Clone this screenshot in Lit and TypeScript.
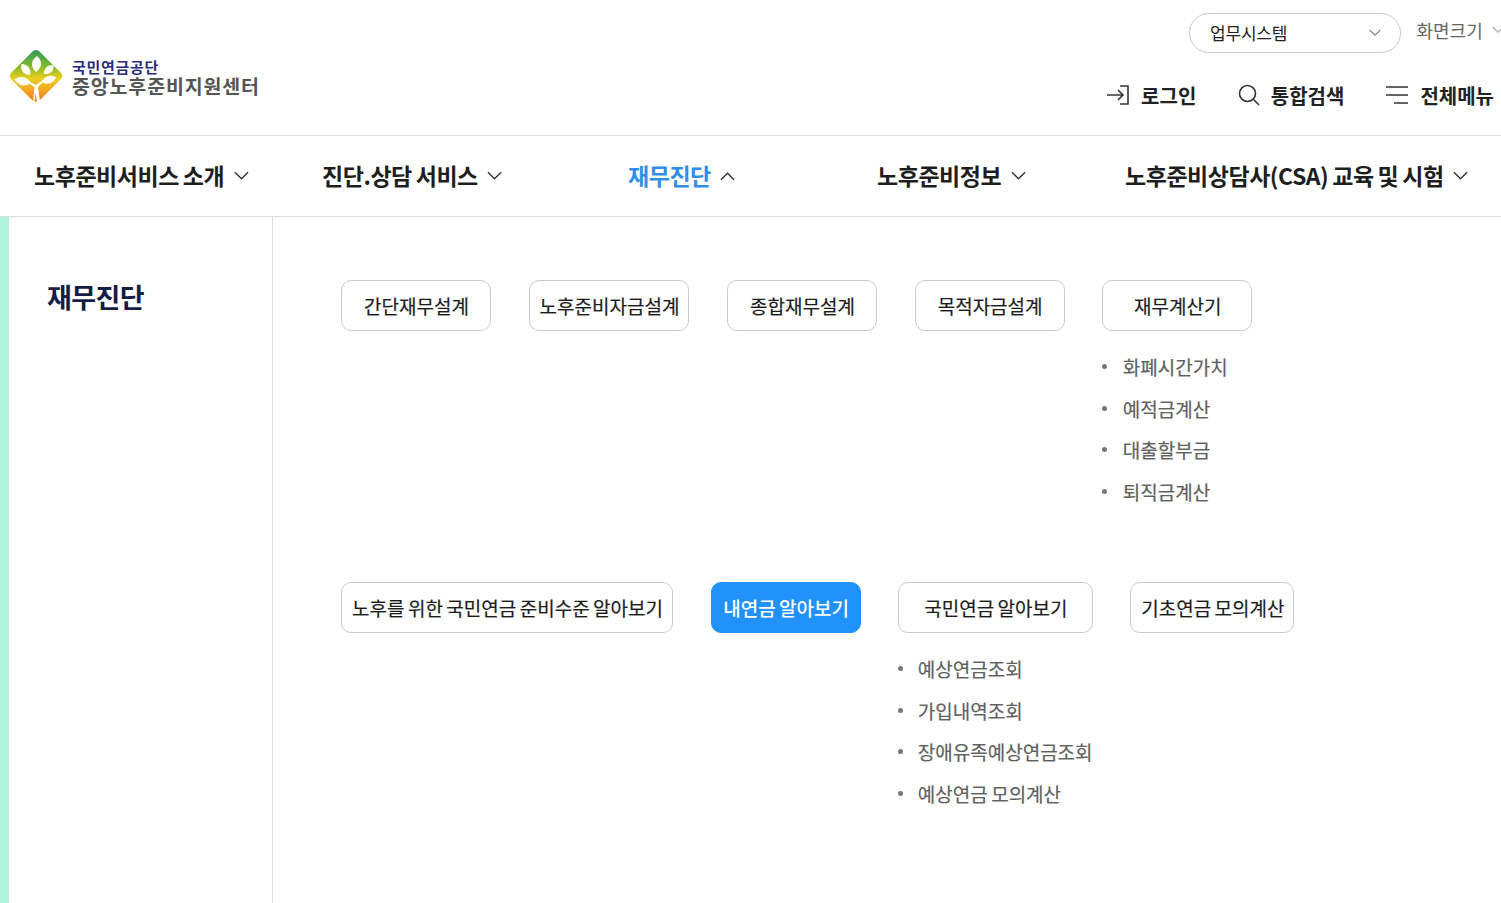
import { LitElement, html, css, svg } from "lit";
import { customElement } from "lit/decorators.js";

const chev = (up = false) => html`<svg class="chev" viewBox="0 0 16 10" fill="none" stroke="currentColor" stroke-width="1.5"><path d=${up ? "M1 9 8 2l7 7" : "M1 1l7 7 7-7"}></path></svg>`;

const leaf = (x: number, y: number, r: number, l = 11, w = 4.5) => svg`<path transform="translate(${x} ${y}) rotate(${r})" d="M0 0C${w} ${-l * 0.3} ${w} ${-l * 0.7} 0 ${-l}C${-w} ${-l * 0.7} ${-w} ${-l * 0.3} 0 0Z" fill="#fff"></path>`;

const logoMark = html`<svg class="mark" viewBox="0 0 54 52">
  <defs><linearGradient id="lg" x1="0" y1="0" x2="0" y2="1">
    <stop offset="0" stop-color="#2e9a55"></stop><stop offset=".3" stop-color="#7db82e"></stop>
    <stop offset=".55" stop-color="#e8cf1c"></stop><stop offset=".78" stop-color="#f4a51f"></stop><stop offset="1" stop-color="#ee7a1c"></stop>
  </linearGradient></defs>
  <path d="M27 0c2 0 3 1 5 3l19 19c3 3 3 5 0 8L31 50c-2 2-6 2-8 0L3 30c-3-3-3-5 0-8L22 3c2-2 3-3 5-3Z" fill="url(#lg)"></path>
  ${leaf(27, 22, 4, 16, 6)}${leaf(21, 25, -38, 14, 5)}${leaf(35, 24, 48, 13, 4.5)}${leaf(22, 33, -78, 17, 5.5)}${leaf(33, 32, 72, 15, 5)}
  <path d="M24 52 25.500 37 18 32l1-1 8 4 7-5 1 1-6 6 2 15h-3l-1.500-9-1 9Z" fill="#fff"></path>
</svg>`;

@customElement("app-root")
export class AppRoot extends LitElement {
  static styles = css`
    :host { display: block; width: 1501px; height: 903px; overflow: hidden; background: #fff; color: #1e1e1e;
      font-family: "Noto Sans CJK KR", "Noto Sans", sans-serif; }
    * { box-sizing: border-box; }
    ul { list-style: none; margin: 0; padding: 0; }
    .header { height: 136px; border-bottom: 1px solid #ddd; display: flex; justify-content: space-between; }
    .logo { display: flex; align-items: center; gap: 9px; margin: 50px 0 0 9px; height: 52px; }
    .mark { width: 54px; height: 52px; flex: none; }
    .logo-text { display: flex; flex-direction: column; margin-top: 3px; }
    .logo-a { font-size: 15px; font-weight: 700; color: #2b2a7c; letter-spacing: .7px; line-height: 16px; }
    .logo-b { font-size: 19.500px; font-weight: 700; color: #555; letter-spacing: .85px; line-height: 21px; }
    .hright { display: flex; flex-direction: column; align-items: flex-end; }
    .top { display: flex; align-items: flex-start; margin-top: 13px; width: 312px; }
    .select { flex: none; width: 212px; height: 40px; border: 1px solid #ccc; border-radius: 20px; display: flex; align-items: center;
      justify-content: space-between; padding: 0 19px 2px 20px; font-size: 17px; color: #222; letter-spacing: -.2px; }
    .select .chev { width: 12px; height: 8px; color: #888; margin-top: 2px; }
    .size { flex: none; display: flex; align-items: center; gap: 9.500px; margin-left: 15.500px; font-size: 18px; color: #666; height: 34px; white-space: nowrap; }
    .size .chev { width: 12px; height: 8px; color: #aaa; flex: none; }
    .utils { display: flex; align-items: center; margin: 27px 7px 0 0; }
    .util { display: flex; align-items: center; font-size: 20px; font-weight: 700; color: #222; height: 30px; white-space: nowrap; }
    .util svg { fill: none; stroke: #333; stroke-width: 1.6; flex: none; }
    .login { margin-right: .5px; }
    .login svg { width: 23px; height: 22px; margin-right: 11px; }
    .search { margin-left: 41px; }
    .search svg { width: 22px; height: 22px; margin-right: 11px; }
    .menu { margin-left: 41px; }
    .menu svg { width: 24px; height: 20px; margin-right: 11px; }
    .gnb { height: 81px; border-bottom: 1px solid #ddd; display: grid; grid-template-columns: 288px 306px 249px 248px 1fr;
      padding: 0 0 2px 34px; align-items: center; }
    .gnb-item { display: flex; align-items: center; gap: 9.500px; font-size: 23px; font-weight: 700; color: #1e1e1e;
      letter-spacing: -.47px; word-spacing: -.8px; white-space: nowrap; height: 40px; }
    .gnb-item .chev { width: 15px; height: 10px; flex: none; color: #333; margin-top: 1px; }
    .gnb-item.on { color: #2f8fe8; }
    .main { display: flex; height: 686px; }
    .bar { width: 9px; background: #b0f3dd; flex: none; }
    .side { width: 264px; flex: none; border-right: 1px solid #ddd; padding: 60px 0 0 38px; }
    .side h2 { margin: 0; font-size: 27px; font-weight: 700; line-height: 40px; color: #141d45; letter-spacing: -.6px; }
    .content { padding: 63px 0 0 68px; flex: 1; }
    .row { display: flex; gap: 37.600px; align-items: flex-start; }
    .row.first { height: 302px; }
    .col { display: flex; flex-direction: column; }
    .btn { height: 51px; min-width: 150px; padding: 0 9px 0 10px; border: 1px solid #ccc; border-radius: 10px; display: flex;
      align-items: center; justify-content: center; font-size: 19px; color: #1c1c1c; background: #fff; white-space: nowrap;
      word-spacing: -.8px; -webkit-text-stroke: .2px currentColor; }
    .btn.on { background: #2192fb; border-color: #2192fb; color: #fff; font-weight: 500; -webkit-text-stroke: 0; }
    .sub { margin-top: 15px; }
    .sub li { display: flex; align-items: center; height: 41.600px; font-size: 19px; color: #606060; white-space: nowrap; position: relative;
      padding-left: 19.600px; word-spacing: -.8px; -webkit-text-stroke: .2px currentColor; }
    .first .sub li { padding-left: 20.600px; }
    .sub li::before { content: ""; position: absolute; left: 0; top: 18px; width: 5px; height: 5px; border-radius: 50%; background: #777; }
  `;

  private btn(label: string, on = false, sub: string[] = []) {
    return html`<div class="col"><div class="btn ${on ? "on" : ""}">${label}</div>
      ${sub.length ? html`<ul class="sub">${sub.map((s) => html`<li>${s}</li>`)}</ul>` : ""}</div>`;
  }

  render() {
    return html`
      <header class="header">
        <div class="logo">${logoMark}
          <div class="logo-text"><span class="logo-a">국민연금공단</span><span class="logo-b">중앙노후준비지원센터</span></div>
        </div>
        <div class="hright">
          <div class="top">
            <div class="select"><span>업무시스템</span>${chev()}</div>
            <div class="size"><span>화면크기</span>${chev()}</div>
          </div>
          <div class="utils">
            <div class="util login"><svg viewBox="0 0 23 22"><path d="M-1 11h17M11 6l5 5-5 5M13 2h8v18h-8"></path></svg>로그인</div>
            <div class="util search"><svg viewBox="0 0 22 22"><circle cx="9.500" cy="9.500" r="8"></circle><path d="m15.500 15.500 5.500 5.500"></path></svg>통합검색</div>
            <div class="util menu"><svg viewBox="0 0 24 20"><path d="M1 2h22M1 10h22M9 18h14"></path></svg>전체메뉴</div>
          </div>
        </div>
      </header>
      <nav class="gnb">
        <div class="gnb-item">노후준비서비스 소개${chev()}</div>
        <div class="gnb-item">진단.상담 서비스${chev()}</div>
        <div class="gnb-item on">재무진단${chev(true)}</div>
        <div class="gnb-item">노후준비정보${chev()}</div>
        <div class="gnb-item">노후준비상담사(CSA) 교육 및 시험${chev()}</div>
      </nav>
      <div class="main">
        <div class="bar"></div>
        <aside class="side"><h2>재무진단</h2></aside>
        <section class="content">
          <div class="row first">
            ${this.btn("간단재무설계")}${this.btn("노후준비자금설계")}${this.btn("종합재무설계")}${this.btn("목적자금설계")}
            ${this.btn("재무계산기", false, ["화폐시간가치", "예적금계산", "대출할부금", "퇴직금계산"])}
          </div>
          <div class="row">
            ${this.btn("노후를 위한 국민연금 준비수준 알아보기")}${this.btn("내연금 알아보기", true)}
            ${this.btn("국민연금 알아보기", false, ["예상연금조회", "가입내역조회", "장애유족예상연금조회", "예상연금 모의계산"])}
            ${this.btn("기초연금 모의계산")}
          </div>
        </section>
      </div>
    `;
  }
}
